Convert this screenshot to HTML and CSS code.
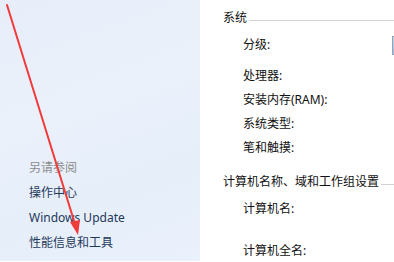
FILE: index.html
```html
<!DOCTYPE html>
<html lang="zh-CN">
<head>
<meta charset="utf-8">
<link rel="stylesheet" href="styles.css">
</head>
<body>
<div class="window">
  <nav class="nav">
    <div class="nav-title">另请参阅</div>
    <a class="nav-link">操作中心</a>
    <a class="nav-link">Windows Update</a>
    <a class="nav-link">性能信息和工具</a>
  </nav>
  <main class="main">
    <div class="section-head first"><span class="section-title">系统</span><span class="rule"></span></div>
    <div class="row rating"><span class="label">分级:</span><span class="value"><span class="rating-box"></span></span></div>
    <div class="row"><span class="label">处理器:</span><span class="value"></span></div>
    <div class="row"><span class="label">安装内存(RAM):</span><span class="value"></span></div>
    <div class="row"><span class="label">系统类型:</span><span class="value"></span></div>
    <div class="row"><span class="label">笔和触摸:</span><span class="value"></span></div>
    <div class="section-head second"><span class="section-title">计算机名称、域和工作组设置</span><span class="rule"></span></div>
    <div class="row name"><span class="label">计算机名:</span><span class="value"></span></div>
    <div class="row fullname"><span class="label">计算机全名:</span><span class="value"></span></div>
  </main>
</div>
<svg class="arrow" width="394" height="262" viewBox="0 0 394 262">
  <line x1="7" y1="5" x2="75" y2="224" stroke="#f23a3a" stroke-width="2" stroke-linecap="round"/>
  <polygon points="78,235 70,222 80,220" fill="#f23a3a"/>
</svg>
</body>
</html>
```
FILE: styles.css
```css
html, body {
  margin: 0;
  padding: 0;
  width: 394px;
  height: 262px;
  overflow: hidden;
  background: #ffffff;
  font-family: "Noto Sans", "Noto Sans CJK SC", sans-serif;
  font-size: 12px;
}

.window {
  display: flex;
  height: 262px;
}

.nav {
  width: 200px;
  height: 261px;
  flex: none;
  box-sizing: border-box;
  padding: 155px 0 0 29px;
  display: flex;
  flex-direction: column;
  background: linear-gradient(160deg, #e7eef9 0%, #eaf1fb 40%, #e6eefa 70%, #eaf1fd 100%);
}

.nav-title {
  line-height: 25px;
  color: #8c8c8c;
}

.nav-link {
  line-height: 25px;
  color: #1e395b;
  white-space: nowrap;
}

.main {
  flex: 1;
  padding-left: 23px;
  color: #111111;
  min-width: 0;
  overflow: hidden;
}

.section-head {
  display: flex;
  align-items: center;
  line-height: 16px;
  height: 16px;
  white-space: nowrap;
}

.section-head.first {
  margin-top: 10px;
}

.section-head.second {
  margin-top: 14px;
}

.section-title {
  flex: none;
}

.rule {
  flex: 1;
  height: 1px;
  margin-top: 4px;
  margin-left: 2px;
  background: #d2d2d2;
}

.row {
  display: flex;
  height: 24px;
  line-height: 24px;
  white-space: nowrap;
}

.row.rating {
  height: 38px;
  line-height: 38px;
}

.row.name {
  margin-top: 7px;
}

.row.fullname {
  margin-top: 18px;
}

.label {
  width: 169px;
  flex: none;
  padding-left: 20px;
  box-sizing: border-box;
}

.value {
  display: flex;
  align-items: center;
}

.rating-box {
  display: block;
  width: 60px;
  height: 19px;
  margin-top: 1px;
  box-sizing: border-box;
  border: 1px solid #8ea4bf;
  background: linear-gradient(#c9d6e6, #a9bdd6);
}

.arrow {
  position: absolute;
  left: 0;
  top: 0;
  pointer-events: none;
}
```
